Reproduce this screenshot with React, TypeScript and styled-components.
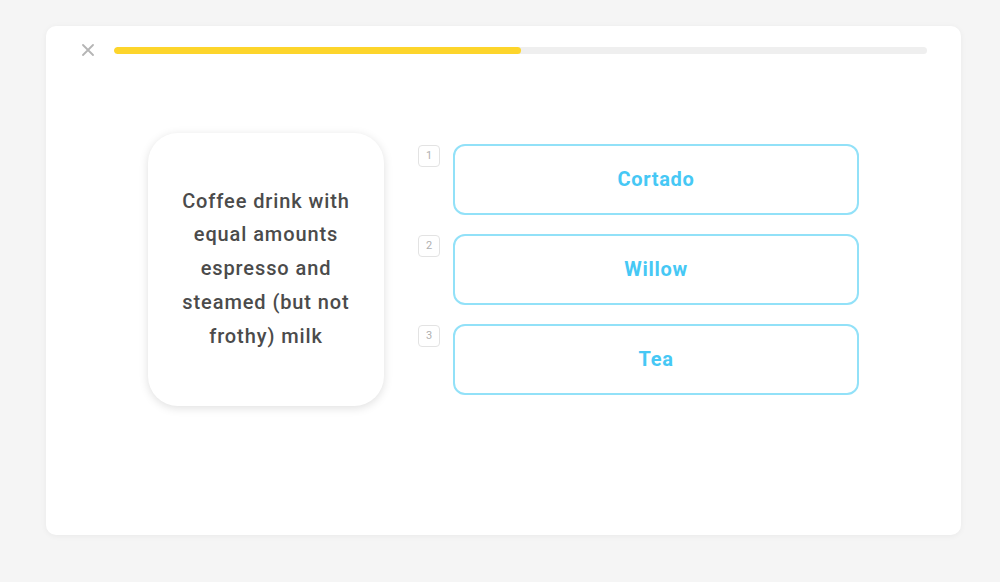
import styled, { createGlobalStyle } from "styled-components";

const GlobalStyle = createGlobalStyle`
  html, body {
    margin: 0;
    padding: 0;
    background: #f5f5f5;
    font-family: Roboto, "Noto Sans", sans-serif;
  }
`;

const options = ["Cortado", "Willow", "Tea"];
const progress = 50;

export default function App() {
  return (
    <>
      <GlobalStyle />
      <Page>
        <Card>
          <TopBar>
            <CloseButton aria-label="close">
              <svg width="12" height="12" viewBox="0 0 12 12">
                <path d="M1 1 L11 11 M11 1 L1 11" stroke="#b5b5b5" strokeWidth="1.8" strokeLinecap="round" />
              </svg>
            </CloseButton>
            <Track>
              <Fill style={{ width: `${progress}%` }} />
            </Track>
          </TopBar>
          <Content>
            <Prompt>
              <PromptText>Coffee drink with equal amounts espresso and steamed (but not frothy) milk</PromptText>
            </Prompt>
            <OptionList>
              {options.map((o, i) => (
                <OptionRow key={o}>
                  <Key>{i + 1}</Key>
                  <OptionButton>{o}</OptionButton>
                </OptionRow>
              ))}
            </OptionList>
          </Content>
        </Card>
      </Page>
    </>
  );
}

const Page = styled.div`
  width: 1000px;
  height: 582px;
  padding: 26px 39px 47px 46px;
  box-sizing: border-box;
`;

const Card = styled.div`
  height: 509px;
  background: #ffffff;
  border-radius: 10px;
  box-shadow: 0 1px 6px rgba(0, 0, 0, 0.05);
  display: flex;
  flex-direction: column;
`;

const TopBar = styled.div`
  display: flex;
  align-items: center;
  padding: 18px 34px 0 36px;
  gap: 20px;
`;

const CloseButton = styled.div`
  width: 12px;
  height: 12px;
  display: flex;
`;

const Track = styled.div`
  flex: 1;
  height: 7px;
  border-radius: 4px;
  background: #efefef;
  overflow: hidden;
`;

const Fill = styled.div`
  height: 100%;
  background: #fdd52b;
  border-radius: 4px;
`;

const Content = styled.div`
  flex: 1;
  display: flex;
  align-items: center;
  justify-content: center;
  gap: 34px;
  padding-bottom: 53px;
`;

const Prompt = styled.div`
  width: 236px;
  height: 273px;
  border-radius: 30px;
  background: #ffffff;
  box-shadow: 0 2px 10px rgba(0, 0, 0, 0.13);
  display: flex;
  align-items: center;
  justify-content: center;
  padding: 0 20px;
  box-sizing: border-box;
`;

const PromptText = styled.p`
  margin: 0;
  text-align: center;
  font-size: 20px;
  font-weight: 500;
  line-height: 33.8px;
  color: #4b4b4b;
  letter-spacing: 0.9px;
`;

const OptionList = styled.div`
  display: flex;
  flex-direction: column;
  gap: 19px;
`;

const OptionRow = styled.div`
  display: flex;
  align-items: flex-start;
  gap: 13px;
`;

const Key = styled.div`
  width: 22px;
  height: 22px;
  margin-top: 1px;
  box-sizing: border-box;
  border: 1.5px solid #e3e3e3;
  border-radius: 4px;
  color: #b0b0b0;
  font-size: 11px;
  display: flex;
  align-items: center;
  justify-content: center;
`;

const OptionButton = styled.div`
  width: 406px;
  height: 71px;
  box-sizing: border-box;
  border: 2px solid #92e1f8;
  border-radius: 12px;
  display: flex;
  align-items: center;
  justify-content: center;
  color: #46c8f5;
  font-size: 20px;
  font-weight: 700;
  letter-spacing: 0.7px;
`;
